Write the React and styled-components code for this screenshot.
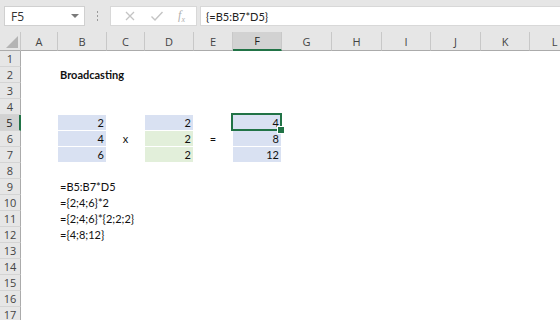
import React from 'react'
import styled, { createGlobalStyle } from 'styled-components'

const GlobalStyle = createGlobalStyle`
    html, body {
        margin: 0;
        padding: 0;
        background: #ffffff;
    }
    body {
        font-family: Lato, "Open Sans", "Liberation Sans", sans-serif;
        overflow: hidden;
    }
`

// 열 너비 (행 머리글 포함)
const colWidths = [21, 37, 49, 38, 49, 39, 49, 50, 50, 49, 50, 49, 50]
const colNames = ['A', 'B', 'C', 'D', 'E', 'F', 'G', 'H', 'I', 'J', 'K', 'L']

const BLUE = '#d9e1f2'
const GREEN = '#e2efda'

// 셀 데이터: 행번호 -> { 열인덱스: {text, fill, align, bold} }
const data = {
    2: { 1: { text: 'Broadcasting', bold: true } },
    5: {
        1: { text: '2', fill: BLUE, align: 'right' },
        3: { text: '2', fill: BLUE, align: 'right' },
        5: { text: '4', fill: BLUE, align: 'right' }
    },
    6: {
        1: { text: '4', fill: BLUE, align: 'right' },
        2: { text: 'x', align: 'center' },
        3: { text: '2', fill: GREEN, align: 'right' },
        4: { text: '=', align: 'center' },
        5: { text: '8', fill: BLUE, align: 'right' }
    },
    7: {
        1: { text: '6', fill: BLUE, align: 'right' },
        3: { text: '2', fill: GREEN, align: 'right' },
        5: { text: '12', fill: BLUE, align: 'right' }
    },
    9: { 1: { text: '=B5:B7*D5' } },
    10: { 1: { text: '={2;4;6}*2' } },
    11: { 1: { text: '={2;4;6}*{2;2;2}' } },
    12: { 1: { text: '={4;8;12}' } }
}

const rows = Array.from({ length: 17 }, (_, i) => i + 1)

const App = () => {
    return (
        <Wrapper>
            <GlobalStyle />
            <Toolbar>
                <NameBox>
                    <span>F5</span>
                    <DropArrow />
                </NameBox>
                <Grip>
                    <i /><i /><i />
                </Grip>
                <FuncBox>
                    <svg width="12" height="12" viewBox="0 0 12 12">
                        <path d="M2 2 L10 10 M10 2 L2 10" stroke="#c4c4c4" strokeWidth="1.3" fill="none" />
                    </svg>
                    <svg width="14" height="12" viewBox="0 0 14 12">
                        <path d="M1.5 6.5 L5 10 L12.5 2" stroke="#c4c4c4" strokeWidth="1.4" fill="none" />
                    </svg>
                    <Fx>f<sub>x</sub></Fx>
                </FuncBox>
                <FormulaInput>{'{=B5:B7*D5}'}</FormulaInput>
            </Toolbar>

            <Sheet>
                <Corner>
                    <svg width="12" height="12" viewBox="0 0 12 12">
                        <path d="M12 0 L12 12 L0 12 Z" fill="#b4b4b4" />
                    </svg>
                </Corner>
                {colNames.map((c, i) => (
                    <ColHead key={c} active={i === 5}>{c}</ColHead>
                ))}

                {rows.map(r => (
                    <React.Fragment key={r}>
                        <RowHead active={r === 5}>{r}</RowHead>
                        {colNames.map((c, i) => {
                            const cell = (data[r] && data[r][i]) || {}
                            return (
                                <Cell key={c} fill={cell.fill} align={cell.align} bold={cell.bold}>
                                    {cell.text}
                                    {r === 5 && i === 5 && (
                                        <Selection>
                                            <Handle />
                                        </Selection>
                                    )}
                                </Cell>
                            )
                        })}
                    </React.Fragment>
                ))}
            </Sheet>
        </Wrapper>
    )
}

//스타일

const Wrapper = styled.div`
    width: 560px;
    height: 320px;
    overflow: hidden;
    background: #ffffff;
`

const Toolbar = styled.div`
    height: 32px;
    background: #e6e6e6;
    display: flex;
    align-items: flex-start;
    padding: 6px 0 0 4px;
    box-sizing: border-box;
`

const NameBox = styled.div`
    width: 81px;
    height: 20px;
    box-sizing: border-box;
    background: #ffffff;
    border: 1px solid #d0d0d0;
    display: flex;
    align-items: center;
    justify-content: space-between;
    padding: 0 5px 0 6px;
    font-family: "Open Sans", sans-serif;
    font-size: 12px;
    color: #333333;
`

const DropArrow = styled.div`
    width: 0;
    height: 0;
    border-left: 4px solid transparent;
    border-right: 4px solid transparent;
    border-top: 4px solid #7a7a7a;
`

const Grip = styled.div`
    width: 25px;
    height: 20px;
    display: flex;
    flex-direction: column;
    align-items: center;
    justify-content: center;
    gap: 2px;

    i {
        width: 1px;
        height: 2px;
        background: #9a9a9a;
    }
`

const FuncBox = styled.div`
    width: 87px;
    height: 20px;
    box-sizing: border-box;
    background: #ffffff;
    border: 1px solid #d8d8d8;
    display: flex;
    align-items: center;
    justify-content: space-around;
    padding: 0 4px 0 6px;
`

const Fx = styled.span`
    font-family: "Liberation Serif", serif;
    font-style: italic;
    font-size: 12px;
    color: #b0b0b0;

    sub {
        font-size: 8px;
    }
`

const FormulaInput = styled.div`
    flex: 1;
    height: 20px;
    margin-left: 3px;
    box-sizing: border-box;
    background: #ffffff;
    border: 1px solid #d8d8d8;
    border-right: none;
    display: flex;
    align-items: center;
    padding-left: 5px;
    font-size: 11px;
    color: #222222;
`

const Sheet = styled.div`
    display: grid;
    grid-template-columns: ${colWidths.map(w => w + 'px').join(' ')};
    grid-template-rows: 19px repeat(17, 16px);
    font-size: 11px;
    color: #111111;
`

const Corner = styled.div`
    background: #e6e6e6;
    border-right: 1px solid #c8c8c8;
    border-bottom: 1px solid #ababab;
    display: flex;
    align-items: flex-end;
    justify-content: flex-end;
    padding: 0 2px 2px 0;
    box-sizing: border-box;
`

const ColHead = styled.div`
    background: ${p => (p.active ? '#d2d2d2' : '#e6e6e6')};
    border-right: 1px solid #c8c8c8;
    border-bottom: ${p => (p.active ? '2px solid #217346' : '1px solid #ababab')};
    box-sizing: border-box;
    display: flex;
    align-items: center;
    justify-content: center;
    font-family: "Open Sans", sans-serif;
    color: ${p => (p.active ? '#222222' : '#444444')};
    font-size: 11px;
`

const RowHead = styled.div`
    background: ${p => (p.active ? '#d2d2d2' : '#e6e6e6')};
    border-right: ${p => (p.active ? '2px solid #217346' : '1px solid #ababab')};
    border-bottom: 1px solid #d4d4d4;
    box-sizing: border-box;
    display: flex;
    align-items: center;
    justify-content: center;
    font-family: "Open Sans", sans-serif;
    color: ${p => (p.active ? '#222222' : '#444444')};
    font-size: 11px;
`

const Cell = styled.div`
    position: relative;
    background: ${p => p.fill || 'transparent'};
    background-clip: padding-box;
    border-right: 1px solid transparent;
    border-bottom: 1px solid transparent;
    box-sizing: border-box;
    display: flex;
    align-items: center;
    justify-content: ${p => (p.align === 'right' ? 'flex-end' : p.align === 'center' ? 'center' : 'flex-start')};
    padding: 0 2px;
    font-weight: ${p => (p.bold ? 700 : 400)};
    white-space: nowrap;
    overflow: visible;
`

const Selection = styled.div`
    position: absolute;
    z-index: 2;
    left: -2px;
    top: -2px;
    right: -1px;
    bottom: -1px;
    border: 2px solid #217346;
    pointer-events: none;
`

const Handle = styled.div`
    position: absolute;
    right: -5px;
    bottom: -5px;
    width: 6px;
    height: 6px;
    background: #217346;
    border: 1px solid #ffffff;
`

export default App
